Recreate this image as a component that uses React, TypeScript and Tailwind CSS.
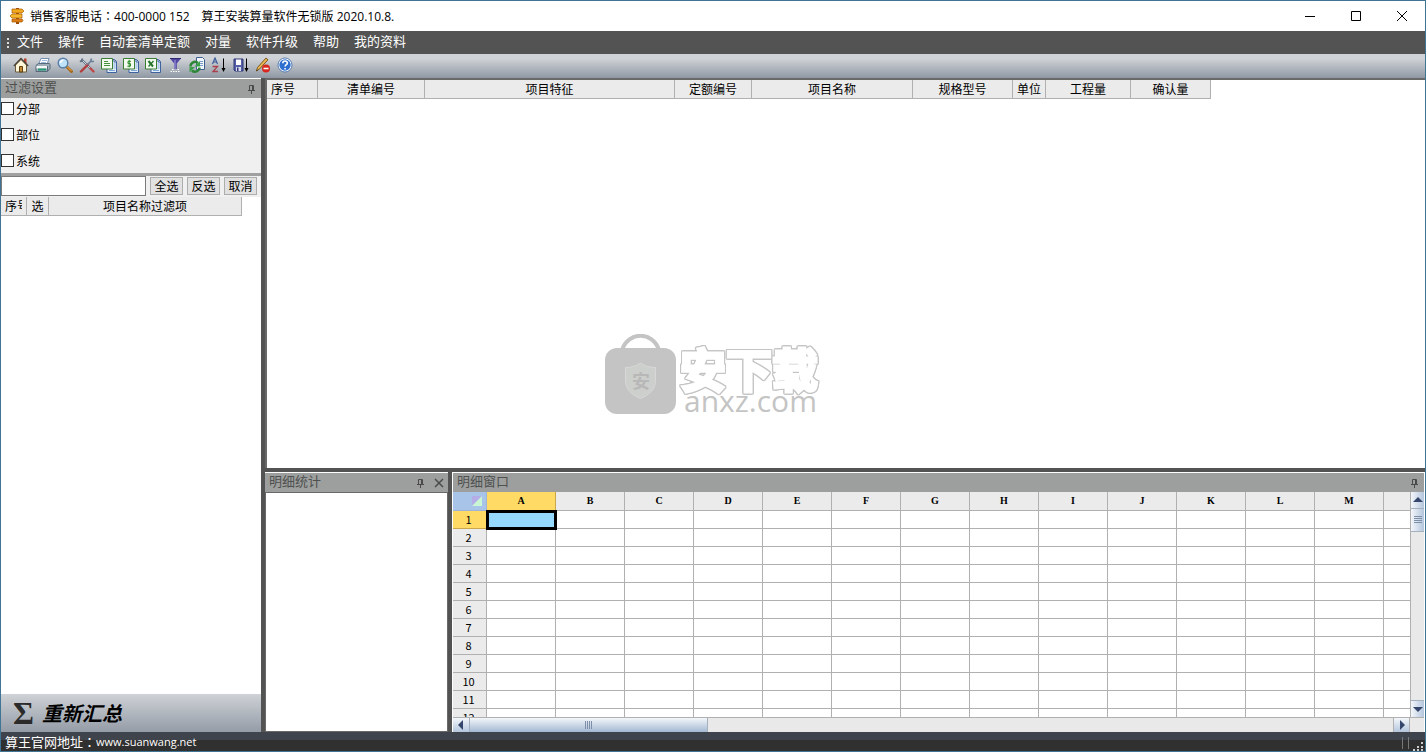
import React, { useState } from 'react'

const menuItems = ['文件', '操作', '自动套清单定额', '对量', '软件升级', '帮助', '我的资料']

const mainColumns = [
  { name: '序号', width: 51, left: true },
  { name: '清单编号', width: 107 },
  { name: '项目特征', width: 250 },
  { name: '定额编号', width: 77 },
  { name: '项目名称', width: 161 },
  { name: '规格型号', width: 100 },
  { name: '单位', width: 33 },
  { name: '工程量', width: 85 },
  { name: '确认量', width: 80 },
]

const sheetColumns = 'ABCDEFGHIJKLM'.split('')
const sheetRows = Array.from({ length: 12 }, (_, i) => i + 1)

function Icon({ children }: { children: React.ReactNode }) {
  return (
    <svg width="16" height="16" viewBox="0 0 16 16" fill="none" aria-hidden="true">
      {children}
    </svg>
  )
}

// Two stacked sheets, shared by the export icons
function Sheets({ children }: { children: React.ReactNode }) {
  return (
    <Icon>
      <path d="M6 2.500h7.500l2 2v11H6z" fill="#e3eefb" stroke="#3f62a0" />
      <path d="M13 3v2h2.500" stroke="#3f62a0" />
      <path d="M12.500 7h2M12.500 9h2M12.500 11h2M8 13.500h6" stroke="#7fa6d8" />
      <path d="M.5 1.500h11v10.500H.5z" fill="#f3fbef" stroke="#3c7d35" />
      {children}
    </Icon>
  )
}

const tools = [
  {
    name: '主页',
    icon: (
      <Icon>
        <path d="M11 1.500h2.500v5H11z" fill="#b5412c" />
        <path d="M2.500 8L8 2.500 13.500 8v7h-11z" fill="#fff6d8" stroke="#6b5a3a" />
        <path d="M.8 9L8 1.500 15.200 9" stroke="#4a4238" strokeWidth="1.300" />
        <path d="M6.500 9.500h3V15h-3z" fill="#c98a34" stroke="#5d4016" />
      </Icon>
    ),
  },
  {
    name: '打印',
    icon: (
      <Icon>
        <path d="M6 1.500h8l-2 6H3.500z" fill="#fff" stroke="#6f8db5" />
        <path d="M7 3.500h5M6 5.500h5" stroke="#9db9dc" />
        <path d="M1 8.500L3.500 6.500h11l.5 1v4l-2.500 3H1z" fill="#9fadb8" stroke="#54697a" />
        <path d="M1.500 9h10.500v2.500H1.500z" fill="#f4f6f8" />
        <path d="M3 12.500h8" stroke="#239a74" strokeWidth="2" />
        <path d="M12.500 9v5" stroke="#54697a" />
      </Icon>
    ),
  },
  {
    name: '查找',
    icon: (
      <Icon>
        <path d="M9.500 9.500l5 5" stroke="#a8681a" strokeWidth="3" strokeLinecap="round" />
        <path d="M10 9.500l4 4" stroke="#edb95a" strokeLinecap="round" />
        <circle cx="6" cy="6" r="4.800" fill="#bfe3f8" stroke="#5a7fa8" strokeWidth="1.400" />
        <path d="M3.500 6a3 3 0 013-2.800" stroke="#fff" strokeWidth="1.500" />
      </Icon>
    ),
  },
  {
    name: '设置',
    icon: (
      <Icon>
        <path d="M3.500 3.500L12 12" stroke="#5b6b82" strokeWidth="2" />
        <path d="M3.500 3.500L12 12" stroke="#e8eef5" strokeWidth=".8" />
        <path d="M.8 4.500L2.500 4l1-2.500" stroke="#5b6b82" strokeWidth="1.800" />
        <path d="M9 7.500L2 14.500" stroke="#b23c3c" strokeWidth="2.400" strokeLinecap="round" />
        <path d="M12.500 1.500l-.8 2.800 3.300.2M11.700 4.300L8.500 7.800" stroke="#6c7f98" strokeWidth="1.700" />
        <path d="M11.500 11.500l3 3" stroke="#c04848" strokeWidth="2.400" strokeLinecap="round" />
      </Icon>
    ),
  },
  {
    name: '导出文本',
    icon: (
      <Sheets>
        <path d="M3 4.500h4M3 6.500h6M3 8.500h6" stroke="#45903a" />
      </Sheets>
    ),
  },
  {
    name: '导出报价',
    icon: (
      <Sheets>
        <path d="M8 4.300H5v2.300h2.500v2.600H4.300M6.200 2.800v7.600" stroke="#2f8a2a" />
      </Sheets>
    ),
  },
  {
    name: '导出 Excel',
    icon: (
      <Sheets>
        <path d="M3.500 4l4.500 5.500" stroke="#24742a" strokeWidth="2" />
        <path d="M8.500 4L3.500 9.500" stroke="#24742a" strokeWidth="1.300" />
      </Sheets>
    ),
  },
  {
    name: '过滤',
    icon: (
      <Icon>
        <path d="M3 1.500h11L9.800 6.500V12H7.200V6.500z" fill="#5148a4" />
        <path d="M3 1.500h11" stroke="#2f286e" />
        <path d="M8 3v9" stroke="#a6a0e0" />
        <path d="M3.500 14.500h10M5 12.500h1.500M10.500 12.500H12" stroke="#fff" strokeDasharray="1.500 1" />
      </Icon>
    ),
  },
  {
    name: '刷新',
    icon: (
      <Icon>
        <path d="M7.500.5h6l2 2v10h-8z" fill="#f1f6fc" stroke="#3e5e90" />
        <path d="M11 4.500h3M11 6.500h3M11 8.500h3" stroke="#7b9bc8" />
        <path d="M1.500 9.500a4.500 4.500 0 017.500-3.500" stroke="#2b8637" strokeWidth="2.500" />
        <path d="M11 4v5.500H5.500z" fill="#39a046" />
        <path d="M10.500 10.500a4.500 4.500 0 01-7.500 3" stroke="#2b8637" strokeWidth="2.500" />
        <path d="M.5 15.500V10H6z" fill="#39a046" />
      </Icon>
    ),
  },
  {
    name: '排序',
    icon: (
      <Icon>
        <path d="M1.500 7L4 1l2.500 6M2.500 5h3" stroke="#3c5c9c" strokeWidth="1.200" />
        <path d="M1.500 9.500h5L2 14.500h5" stroke="#a8414a" strokeWidth="1.300" />
        <path d="M12.500 1.500v12" stroke="#000" />
        <path d="M10.500 11h4l-2 4z" fill="#000" />
      </Icon>
    ),
  },
  {
    name: '保存排序',
    icon: (
      <Icon>
        <path d="M1 2h9v12H2l-1-1z" fill="#5560a8" stroke="#2f3778" />
        <path d="M3 2.500h5V8H3z" fill="#fff" />
        <path d="M3 10h5v4H3z" fill="#d8dcf0" />
        <path d="M4 10.500h1.500V14H4z" fill="#2f3778" />
        <path d="M13.500 1.500v12" stroke="#000" />
        <path d="M11.500 11h4l-2 4z" fill="#000" />
      </Icon>
    ),
  },
  {
    name: '删除编辑',
    icon: (
      <Icon>
        <path d="M11 1l2 1.800L4.500 12 1.500 14l1-3.500z" fill="#eab552" stroke="#7e5a20" />
        <path d="M1.500 14l.4-1.500 1 1z" fill="#222" />
        <circle cx="11" cy="11.500" r="4" fill="#d8271f" />
        <path d="M8.500 11.500h5" stroke="#fff" strokeWidth="1.600" />
      </Icon>
    ),
  },
  {
    name: '帮助',
    icon: (
      <Icon>
        <circle cx="8" cy="8" r="6.300" fill="#2f6fd0" stroke="#fff" strokeWidth="1.200" />
        <circle cx="8" cy="8" r="7" stroke="#3766a8" strokeWidth=".8" />
        <path d="M5.800 6.300c0-3 4.600-2.900 4.600-.2 0 1.600-2.300 1.600-2.300 3.400M8.100 11v1.600" stroke="#fff" strokeWidth="1.600" />
      </Icon>
    ),
  },
]

function Pin() {
  return (
    <svg width="9" height="10" viewBox="0 0 9 10" fill="none" aria-hidden="true">
      <path d="M2.500 6V1.500h4V6M5.500 1.500V6M1 6.500h7M4.500 6.500V10" stroke="#4a4a4a" />
    </svg>
  )
}

function PanelHeader({ title, closable }: { title: string; closable?: boolean }) {
  return (
    <header className="flex h-5 shrink-0 items-center border-t border-white bg-[#9d9f9e] px-1 text-[13px] leading-4 text-[#4f5150]">
      <h2 className="flex-1 pb-1">{title}</h2>
      <button type="button" aria-label="固定" className="px-px">
        <Pin />
      </button>
      {closable && (
        <button type="button" aria-label="关闭面板" className="ml-2">
          <svg width="10" height="10" viewBox="0 0 10 10" aria-hidden="true">
            <path d="M1 1l8 8M9 1L1 9" stroke="#4a4a4a" strokeWidth="1.500" />
          </svg>
        </button>
      )}
    </header>
  )
}

function Arrow({ d }: { d: string }) {
  return (
    <svg width="10" height="10" viewBox="0 0 10 10" aria-hidden="true">
      <path d={d} fill="#34466b" />
    </svg>
  )
}

// The Traditional Chinese face centres its full-width colon
function Colon() {
  return <span className="font-['Noto_Sans_CJK_TC',sans-serif]">：</span>
}

function Watermark() {
  return (
    <div className="pointer-events-none absolute top-[254px] left-[338px] flex font-['Open_Sans','Noto_Sans_CJK_SC',sans-serif] text-[#c4c4c4]">
      <svg width="71" height="81" viewBox="0 0 71 81" fill="none" aria-hidden="true">
        <path d="M17 16C23 -3 48 -3 54 16" stroke="#c4c4c4" strokeWidth="4" />
        <rect y="14" width="71" height="66" rx="12" fill="#c4c4c4" />
        <path d="M35.500 29c4 3 9 4.500 15 4.500v13c0 9-6 14-15 18-9-4-15-9-15-18v-13c6 0 11-1.500 15-4.500z" fill="#cdcfcc" stroke="#d8d8d8" />
        <text x="36" y="54" textAnchor="middle" fontSize="18" fontWeight="700" fill="#b8b8b8">安</text>
      </svg>
      <div className="ml-1 pt-3">
        <div className="text-[46px] leading-[46px] font-bold text-white [-webkit-text-stroke:3px_#fff] [filter:drop-shadow(1px_0_0_#c4c4c4)_drop-shadow(-1px_0_0_#c4c4c4)_drop-shadow(0_1px_0_#c4c4c4)_drop-shadow(0_-1px_0_#c4c4c4)] [paint-order:stroke] [stroke-linejoin:round]">安下载</div>
        <div className="pl-1 text-[30px] leading-[18px] font-medium">anxz.com</div>
      </div>
    </div>
  )
}

function FilterPanel() {
  const [keyword, setKeyword] = useState('')

  return (
    <aside className="flex w-[260px] shrink-0 flex-col bg-white">
      <PanelHeader title="过滤设置" />
      <div className="border-b-3 border-[#a0a0a0] bg-[#f0f0f0]">
        {['分部', '部位', '系统'].map(name => (
          <label key={name} className="flex h-[26px] items-start gap-0.5 pt-1 text-[12px] leading-[14px] last:h-[23px]">
            <input type="checkbox" className="h-[13px] w-[13px] appearance-none border border-[#333] bg-white checked:bg-[#333]" />
            {name}
          </label>
        ))}
      </div>
      <div className="flex items-center gap-1 bg-[#f0f0f0] pr-1 pb-px text-[12px]">
        <input
          type="text"
          aria-label="过滤关键字"
          className="h-5 min-w-0 flex-1 border border-[#7a7a7a] bg-white px-1 outline-none"
          value={keyword}
          onChange={e => setKeyword(e.target.value)}
        />
        {['全选', '反选', '取消'].map(name => (
          <button key={name} type="button" className="h-[18px] w-[33px] border border-[#adadad] bg-[#e1e1e1] leading-4">
            {name}
          </button>
        ))}
      </div>
      <div className="flex-1">
        <table className="w-[241px] table-fixed border-separate border-spacing-0 text-[12px] leading-[18px]">
          <thead>
            <tr className="bg-[#ebebeb]">
              <th className="w-[26px] border-r border-b border-[#b0b0b0] p-0 px-1 font-normal">
                <span className="block overflow-hidden text-left whitespace-nowrap">序号</span>
              </th>
              <th className="w-[22px] border-r border-b border-[#b0b0b0] p-0 font-normal">选</th>
              <th className="border-r border-b border-[#b0b0b0] p-0 font-normal">项目名称过滤项</th>
            </tr>
          </thead>
        </table>
      </div>
      <button type="button" className="flex h-[38px] shrink-0 items-center gap-2 bg-linear-to-b from-[#cfd2d6] to-[#949ca7] pl-3">
        <span className="font-['Liberation_Serif',serif] text-[32px] leading-8 font-bold text-[#2b2b2b]">Σ</span>
        <span className="text-[20px] leading-5 font-bold italic">重新汇总</span>
      </button>
    </aside>
  )
}

function Sheet() {
  return (
    <>
      <div className="flex min-h-0 flex-1">
        <div className="min-w-0 flex-1 overflow-hidden">
          <table className="w-full table-fixed border-separate border-spacing-0 text-center">
            <thead>
              <tr className="h-[19px] bg-[#ebebeb] font-['Liberation_Serif',serif] text-[10px] leading-[18px]">
                <th className="w-[34px] border-r border-b border-[#9fb4d4] bg-[#a9c4e9] p-0">
                  <div className="flex h-[18px] justify-end pt-1 pr-1">
                    <svg width="10" height="10" viewBox="0 0 10 10" aria-hidden="true">
                      <path d="M0 0h10L0 10z" fill="#b5aee6" />
                      <path d="M10 0v10H0z" fill="#c8f5d4" />
                    </svg>
                  </div>
                </th>
                {sheetColumns.map((name, i) => (
                  <th key={name} className={i === 0 ? 'w-[69px] border-r border-b border-[#c9a64a] bg-[#ffdb66] p-0' : 'w-[69px] border-r border-b border-[#b0b0b0] p-0'}>
                    {name}
                  </th>
                ))}
                <th className="border-b border-[#b0b0b0] p-0" />
              </tr>
            </thead>
            <tbody>
              {sheetRows.map(row => (
                <tr key={row} className="h-[18px]">
                  <th
                    className={
                      row === 1
                        ? 'border-r border-b border-[#c9a64a] bg-[#ffdb66] p-0 pr-0.5 text-[11px] leading-[17px] font-normal'
                        : 'border-r border-b border-[#b0b0b0] bg-[#ebebeb] p-0 pr-0.5 text-[11px] leading-[17px] font-normal'
                    }
                  >
                    {row}
                  </th>
                  {sheetColumns.map(name => (
                    <td
                      key={name}
                      className={
                        row === 1 && name === 'A'
                          ? 'border-r border-b border-[#b0b0b0] bg-[#96d9ff] p-0 outline-3 -outline-offset-2 outline-black'
                          : 'border-r border-b border-[#b0b0b0] p-0'
                      }
                    />
                  ))}
                  <td className="border-b border-[#b0b0b0] p-0" />
                </tr>
              ))}
            </tbody>
          </table>
        </div>
        <div className="flex w-[14px] shrink-0 flex-col border-l border-[#b0b0b0] bg-[#e9e9e9]">
          <button type="button" aria-label="向上滚动" className="flex h-4 items-center justify-center bg-linear-to-r from-[#f4f7fb] to-[#b4c6dd]">
            <Arrow d="M0 7l5-5 5 5z" />
          </button>
          <div className="flex h-6 items-center justify-center border-y border-[#a5b0be] bg-linear-to-r from-[#f4f7fb] to-[#b4c6dd]">
            <svg width="8" height="8" aria-hidden="true">
              <path d="M0 .5h8M0 2.500h8M0 4.500h8M0 6.500h8" stroke="#7d8ea8" />
            </svg>
          </div>
          <div className="flex-1" />
          <button type="button" aria-label="向下滚动" className="flex h-[17px] items-center justify-center border-t border-[#a5b0be] bg-linear-to-r from-[#f4f7fb] to-[#b4c6dd]">
            <Arrow d="M0 3l5 5 5-5z" />
          </button>
        </div>
      </div>
      <div className="flex h-[15px] shrink-0 border-t border-[#b0b0b0] bg-[#e9e9e9] pr-[14px]">
        <button type="button" aria-label="向左滚动" className="flex w-4 items-center justify-center bg-linear-to-b from-[#f4f7fb] to-[#b4c6dd]">
          <Arrow d="M7 0v10L2 5z" />
        </button>
        <div className="flex w-1/4 items-center justify-center border-x border-[#a5b0be] bg-linear-to-b from-[#f4f7fb] to-[#a4b8d2]">
          <svg width="8" height="8" aria-hidden="true">
            <path d="M.5 0v8M2.500 0v8M4.500 0v8M6.500 0v8" stroke="#7d8ea8" />
          </svg>
        </div>
        <div className="flex-1" />
        <button type="button" aria-label="向右滚动" className="flex w-[17px] items-center justify-center border-x border-[#b0b0b0] bg-linear-to-b from-[#f4f7fb] to-[#b4c6dd]">
          <Arrow d="M3 0v10l5-5z" />
        </button>
      </div>
    </>
  )
}

export default function App() {
  return (
    <div className="flex h-screen flex-col border border-[#3f7495] bg-white font-['Noto_Sans_CJK_SC',sans-serif] text-black">
      {/* Title bar */}
      <header className="flex h-[30px] shrink-0 items-center">
        <svg className="ml-2 shrink-0" width="16" height="16" viewBox="0 0 16 16" aria-hidden="true">
          <path d="M7 0h3v16H7z" fill="#9c4a08" />
          <path d="M3 1h10l2 2-2 2H3z" fill="#f1a91e" stroke="#a85a08" strokeWidth=".7" />
          <path d="M3 6h10v4H3L1 8z" fill="#f7b92c" stroke="#a85a08" strokeWidth=".7" />
          <path d="M3 11h10l1 1.500L13 14H3z" fill="#e07f14" stroke="#a85a08" strokeWidth=".7" />
        </svg>
        <h1 className="ml-[5px] flex-1 font-['Open_Sans','Noto_Sans_CJK_SC',sans-serif] text-[12px] leading-4">
          销售客服电话<Colon />400-0000 152　算王安装算量软件无锁版 2020.10.8.
        </h1>
        <button type="button" aria-label="最小化" className="flex w-[46px] justify-center">
          <svg width="10" height="10" aria-hidden="true"><path d="M0 5.500h10" stroke="#000" /></svg>
        </button>
        <button type="button" aria-label="最大化" className="flex w-[46px] justify-center">
          <svg width="10" height="10" aria-hidden="true"><path d="M.5.500h9v9h-9z" fill="none" stroke="#000" /></svg>
        </button>
        <button type="button" aria-label="关闭" className="flex w-[46px] justify-center">
          <svg width="10" height="10" aria-hidden="true"><path d="M0 0l10 10M10 0L0 10" stroke="#000" /></svg>
        </button>
      </header>

      {/* Menu */}
      <nav className="flex h-[23px] shrink-0 items-center gap-[15px] bg-[#535353] pb-1 text-[13px] leading-4 text-white">
        <svg className="mt-1 -mr-[7px] ml-1.5" width="2" height="10" aria-hidden="true">
          <path d="M0 0h2v2H0zM0 4h2v2H0zM0 8h2v2H0z" fill="#ddd" />
        </svg>
        {menuItems.map(name => (
          <button key={name} type="button" className="shrink-0">{name}</button>
        ))}
      </nav>

      {/* Toolbar */}
      <div className="flex h-6 shrink-0 items-center bg-linear-to-b from-[#cfd2d6] from-20% to-[#8f98a3] pb-0.5 pl-[9px]">
        {tools.map(tool => (
          <button key={tool.name} type="button" title={tool.name} aria-label={tool.name} className="flex w-[22px] justify-center">
            {tool.icon}
          </button>
        ))}
      </div>

      <main className="flex min-h-0 flex-1 gap-1 bg-[#535353]">
        <FilterPanel />
        <div className="flex min-w-0 flex-1 flex-col gap-1">
          <section className="relative min-h-0 flex-1 overflow-hidden border-t-2 border-l-2 border-[#696969] bg-white">
            <table className="table-fixed border-separate border-spacing-0 text-[12px] leading-[18px]">
              <thead>
                <tr className="bg-[#ebebeb]">
                  {mainColumns.map(col => (
                    <th
                      key={col.name}
                      className={col.left ? 'border-r border-b border-[#b0b0b0] p-0 text-left font-normal' : 'border-r border-b border-[#b0b0b0] p-0 font-normal'}
                    >
                      <div className={col.left ? 'pl-1' : ''} style={{ width: col.width - 1 }}>{col.name}</div>
                    </th>
                  ))}
                </tr>
              </thead>
            </table>
            <Watermark />
          </section>
          <div className="flex h-[260px] shrink-0 gap-1">
            <section className="flex w-[183px] shrink-0 flex-col bg-white">
              <PanelHeader title="明细统计" closable />
              <div className="flex-1 border border-[#696969]" />
            </section>
            <section className="flex min-w-0 flex-1 flex-col bg-white px-px">
              <PanelHeader title="明细窗口" />
              <Sheet />
            </section>
          </div>
        </div>
      </main>

      <footer className="flex h-[19px] shrink-0 items-center bg-linear-to-b from-[#3f434c] from-40% to-[#303030] to-40% pl-1 text-[13px] leading-4 text-white">
        算王官网地址<Colon />
        <a href="http://www.suanwang.net" className="flex-1 font-['Open_Sans',sans-serif] text-[11px]">www.suanwang.net</a>
        <svg width="26" height="19" fill="none" aria-hidden="true">
          <path d="M3.500 5v12M9.500 5v12" stroke="#777" />
          <path d="M22 10h2v2h-2zM18 14h2v2h-2zM22 14h2v2h-2zM14 17h2v2h-2zM18 17h2v2h-2zM22 17h2v2h-2z" fill="#ccc" />
        </svg>
      </footer>
    </div>
  )
}
